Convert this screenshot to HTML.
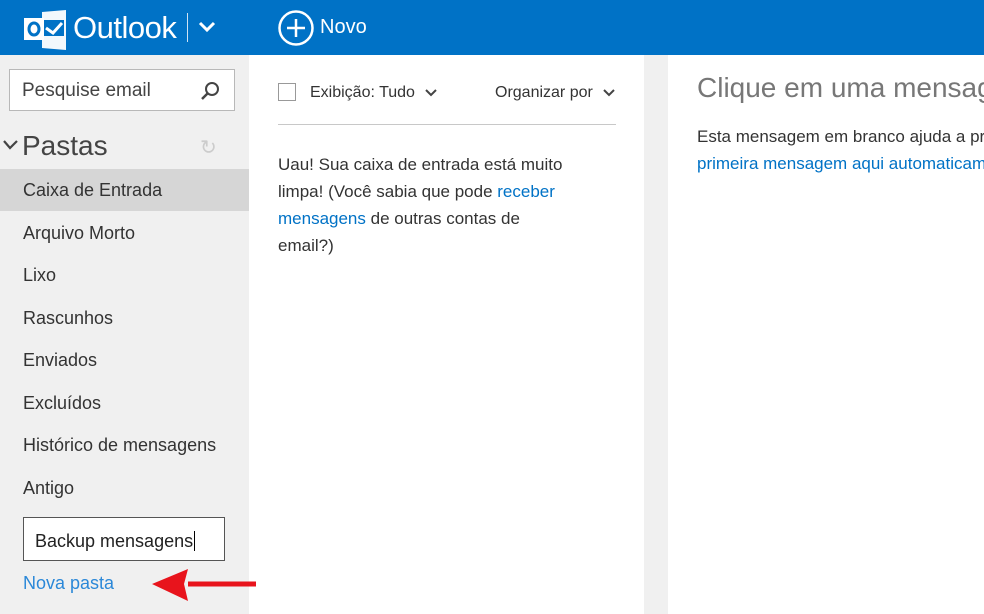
<!DOCTYPE html><html><head><meta charset="utf-8"><style>
*{margin:0;padding:0;box-sizing:border-box}
body{width:984px;height:614px;overflow:hidden;position:relative;font-family:"Liberation Sans",sans-serif;background:#fff;color:#333}
.a{position:absolute;white-space:nowrap}
.hdr{left:0;top:0;width:984px;height:55px;background:#0072c6}
.left{left:0;top:55px;width:249px;height:559px;background:#f0f0f0}
.strip{left:644px;top:55px;width:24px;height:559px;background:#f0f0f0}
.f{left:23px;font-size:18px;color:#333}
.blue{color:#0072c6}
</style></head><body>
<div class="a hdr"></div>
<svg class="a" style="left:22px;top:10px" width="46" height="40" viewBox="0 0 46 40">
<path d="M20 2 L44 0 L44 40 L20 38 Z" fill="#fff" opacity="0.95"/>
<rect x="22" y="10" width="20" height="16" fill="#0072c6"/>
<path d="M24 18 L31 23 L40 13" stroke="#fff" stroke-width="3" fill="none"/>
<rect x="2" y="8" width="20" height="22" fill="#fff"/>
<ellipse cx="12" cy="19" rx="5" ry="6" fill="none" stroke="#0072c6" stroke-width="3"/>
</svg>
<div class="a" style="left:73px;top:10px;font-size:31px;color:#fff;letter-spacing:-0.5px">Outlook</div>
<div class="a" style="left:187px;top:13px;width:1px;height:29px;background:#cfe3f4"></div>
<svg class="a" style="left:198px;top:20px" width="18" height="14"><path d="M2 3 L9 10 L16 3" stroke="#fff" stroke-width="3" fill="none"/></svg>
<svg class="a" style="left:277px;top:9px" width="38" height="38"><circle cx="19" cy="19" r="16.5" stroke="#fff" stroke-width="2.5" fill="none"/><path d="M19 10V28M10 19H28" stroke="#fff" stroke-width="2.5"/></svg>
<div class="a" style="left:320px;top:16px;font-size:20px;color:#fff">Novo</div>
<div class="a left"></div>
<div class="a" style="left:9px;top:69px;width:226px;height:42px;border:1px solid #b8b8b8;background:#fff"></div>
<div class="a" style="left:22px;top:80px;font-size:19px;color:#444">Pesquise email</div>
<svg class="a" style="left:199px;top:80px" width="24" height="22"><circle cx="13" cy="9" r="6" stroke="#444" stroke-width="2" fill="none"/><path d="M9 13 L3 19" stroke="#444" stroke-width="2.5"/></svg>
<svg class="a" style="left:2px;top:138px" width="18" height="14"><path d="M2 3 L8 10 L15 3" stroke="#444" stroke-width="2.2" fill="none"/></svg>
<div class="a" style="left:22px;top:130px;font-size:28px;color:#444">Pastas</div>
<div class="a" style="left:200px;top:135px;font-size:20px;color:#ccc">↻</div>
<div class="a" style="left:0;top:169px;width:249px;height:42px;background:#d6d6d6"></div>
<div class="a f" style="top:180px">Caixa de Entrada</div>
<div class="a f" style="top:223px">Arquivo Morto</div>
<div class="a f" style="top:265px">Lixo</div>
<div class="a f" style="top:308px">Rascunhos</div>
<div class="a f" style="top:350px">Enviados</div>
<div class="a f" style="top:393px">Excluídos</div>
<div class="a f" style="top:435px">Histórico de mensagens</div>
<div class="a f" style="top:478px">Antigo</div>
<div class="a" style="left:23px;top:517px;width:202px;height:44px;border:1px solid #555;background:#fff"></div>
<div class="a" style="left:35px;top:531px;font-size:18px;color:#222">Backup mensagens<span style="border-left:1px solid #000;margin-left:1px"></span></div>
<div class="a f blue" style="top:573px;color:#2b88d8">Nova pasta</div>
<svg class="a" style="left:148px;top:565px" width="112" height="40"><path d="M108 19 H40" stroke="#e8141c" stroke-width="5"/><path d="M4 19 L40 4 L36 19 L40 36 Z" fill="#e8141c"/></svg>
<div class="a" style="left:278px;top:83px;width:18px;height:18px;border:1px solid #999;background:#fff"></div>
<div class="a" style="left:310px;top:84px;font-size:16px;color:#333">Exibição: Tudo</div>
<svg class="a" style="left:424px;top:87px" width="14" height="12"><path d="M2 3 L7 8 L12 3" stroke="#444" stroke-width="2" fill="none"/></svg>
<div class="a" style="left:495px;top:84px;font-size:16px;color:#333">Organizar por</div>
<svg class="a" style="left:602px;top:87px" width="14" height="12"><path d="M2 3 L7 8 L12 3" stroke="#444" stroke-width="2" fill="none"/></svg>
<div class="a" style="left:278px;top:124px;width:338px;height:1px;background:#c8c8c8"></div>
<div class="a" style="left:278px;top:151px;font-size:17px;line-height:27px;color:#333">Uau! Sua caixa de entrada está muito<br>limpa! (Você sabia que pode <span class="blue">receber</span><br><span class="blue">mensagens</span> de outras contas de<br>email?)</div>
<div class="a strip"></div>
<div class="a" style="left:697px;top:72px;font-size:28px;color:#777">Clique em uma mensagem</div>
<div class="a" style="left:697px;top:123px;font-size:17px;line-height:27px;color:#333">Esta mensagem em branco ajuda a proteger<br><span class="blue">primeira mensagem aqui automaticamente</span></div>
</body></html>
